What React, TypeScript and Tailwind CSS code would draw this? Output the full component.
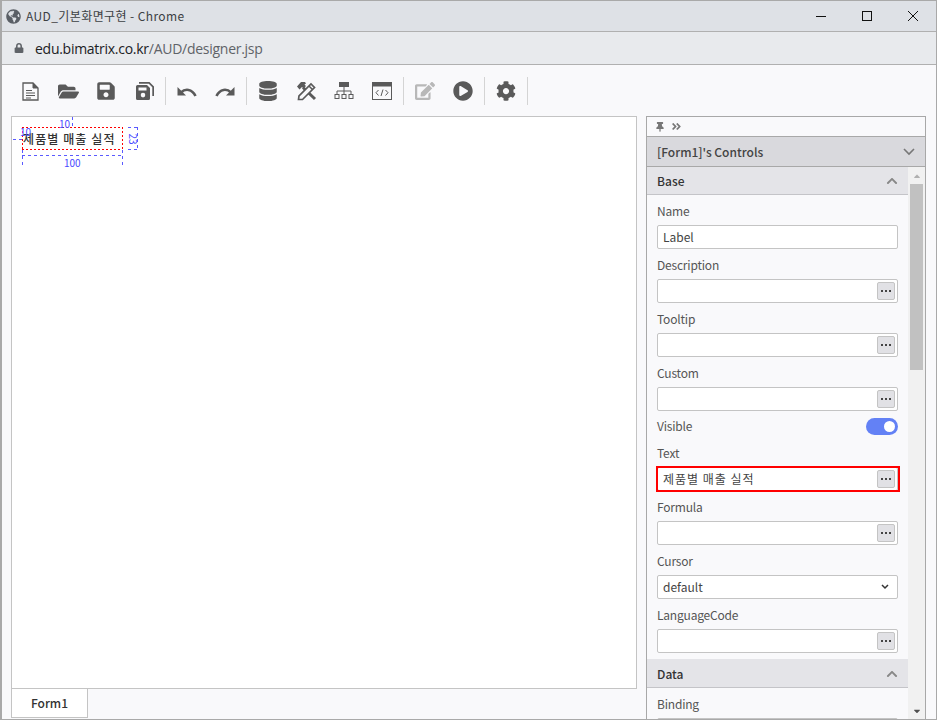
import React from "react";
import { FaFolderOpen, FaSave, FaDatabase, FaPlayCircle, FaEdit, FaCog, FaGlobeAmericas, FaLock, FaThumbtack, FaAngleDoubleRight, FaChevronUp, FaCaretUp, FaCaretDown } from "react-icons/fa";

const font = "font-['Noto_Sans_CJK_KR','Noto_Sans',sans-serif]";

const blueH = "bg-[repeating-linear-gradient(90deg,#5a5aff_0_3px,transparent_3px_6px)]";
const blueV = "bg-[repeating-linear-gradient(180deg,#5a5aff_0_3px,transparent_3px_6px)]";
const redH = "bg-[repeating-linear-gradient(90deg,#f00_0_2px,transparent_2px_4px)]";
const redV = "bg-[repeating-linear-gradient(180deg,#f00_0_2px,transparent_2px_4px)]";

function DocIcon() {
  return (
    <svg viewBox="0 0 17 19" width="17" height="19" fill="none" stroke="#5a5a5a">
      <path d="M1 1h10l5 5v12H1z" strokeWidth="1.300" />
      <path d="M11 1v5h5z" fill="#5a5a5a" strokeWidth="1" />
      <path d="M4 8.500h6M4 11h9M4 13.500h9M4 16h5" strokeWidth="1.200" />
    </svg>
  );
}

function SaveAll() {
  return (
    <svg viewBox="0 0 19 20" width="19" height="20" fill="#5a5a5a">
      <path d="M1 5.500A1.500 1.500 0 0 1 2.500 4H12l3 3v10.500A1.500 1.500 0 0 1 13.500 19h-11A1.500 1.500 0 0 1 1 17.500zM3.500 6.500v3h8v-3zM8 11.800a2.300 2.300 0 1 0 0 4.600A2.300 2.300 0 0 0 8 11.800z" />
      <path d="M4 1h10.500L19 5.500V15h-1.700V6.200L13.800 2.700H4z" />
    </svg>
  );
}

function ToolsIcon() {
  return (
    <svg viewBox="0 0 21 20" width="21" height="20" fill="none">
      <path d="M1 5.500 5 1h4l1 1.500-1.500 1L10 5l-2.500 2.500L6 6 3.500 8.500z" fill="#5a5a5a" />
      <path d="M7 6.500 19 18" stroke="#5a5a5a" strokeWidth="3" />
      <path d="M2.500 18.500 3 15 15 3l3.500 3.500-12 12z" fill="#f9f9fb" stroke="#5a5a5a" strokeWidth="1.700" />
      <path d="M13 5l3.500 3.500" stroke="#5a5a5a" strokeWidth="1.500" />
    </svg>
  );
}

function UndoIcon({ flip }: { flip?: boolean }) {
  return (
    <svg viewBox="0 0 20 11" width="20" height="11" fill="#5a5a5a" className={flip ? "-scale-x-100" : ""}>
      <path d="M0.500 1v8.500h8.500z" />
      <path d="M4 6.500C8 2.500 15 2.500 18.500 10" fill="none" stroke="#5a5a5a" strokeWidth="2.600" />
    </svg>
  );
}

function CodeWin() {
  return (
    <svg viewBox="0 0 20 20" width="20" height="20" fill="none" stroke="#5a5a5a">
      <rect x="0.500" y="1.500" width="19" height="17" strokeWidth="1" />
      <rect x="0.500" y="1.500" width="19" height="3.500" fill="#5a5a5a" />
      <path d="M6.500 9 4 11.700 6.500 14.500M13.500 9 16 11.700 13.500 14.500M11 8.500 9 15" strokeWidth="1" />
    </svg>
  );
}

function Sitemap() {
  return (
    <svg viewBox="0 0 20 20" width="20" height="20" fill="none" stroke="#5a5a5a">
      <rect x="5" y="1" width="10" height="5" fill="#5a5a5a" stroke="none" />
      <path d="M10 6v4M3 13v-3h14v3M10 10v3" />
      <rect x="1" y="13.500" width="4" height="4" />
      <rect x="8" y="13.500" width="4" height="4" />
      <rect x="15" y="13.500" width="4" height="4" />
    </svg>
  );
}

function Btn({ children }: { children: React.ReactNode }) {
  return <div className="w-[38px] h-[28px] flex items-center justify-center shrink-0">{children}</div>;
}

function Sep() {
  return <div className="w-px h-[28px] mx-[2px] bg-[#d4d4d4] shrink-0" />;
}

function Dots() {
  return (
    <div className="w-[18px] h-[18px] bg-[#e1e1e5] border border-[#c4c4c4] rounded-[2px] flex items-center justify-center gap-[2px] shrink-0">
      <span className="w-[2px] h-[2px] bg-[#444]" />
      <span className="w-[2px] h-[2px] bg-[#444]" />
      <span className="w-[2px] h-[2px] bg-[#444]" />
    </div>
  );
}

function Label({ text }: { text: string }) {
  return <div className="h-[30px] flex items-end pb-[5px] text-[12px] leading-[18px] text-[#555] tracking-[-0.2px]">{text}</div>;
}

function Field({ label, value, dots, wide }: { label: string; value?: string; dots?: boolean; wide?: boolean }) {
  return (
    <div>
      <Label text={label} />
      <div className="h-[24px] bg-white border border-[#c4c4c4] rounded-[2px] flex items-center justify-between pl-[5px] pr-[2px] text-[12px] text-[#444]">
        <span className={wide ? "tracking-[1px]" : ""}>{value}</span>
        {dots && <Dots />}
      </div>
    </div>
  );
}

function SectionHeader({ text, tall }: { text: string; tall?: boolean }) {
  return (
    <div className={`${tall ? "h-[29px] pt-[2px]" : "h-[28px]"} bg-[#e4e4e8] border-b border-[#c4c4c8] flex items-center justify-between pl-[10px] pr-[10px] text-[12px] font-medium text-[#333] shrink-0`}>
      <span>{text}</span>
      <FaChevronUp size={12} color="#888" />
    </div>
  );
}

export default function App() {
  return (
    <div className={`${font} w-[937px] h-[720px] flex flex-col overflow-hidden bg-[#f9f9fb] border-l-2 border-t border-r border-b border-[#a9a9a9] box-border`}>
      <div className="h-[30px] bg-[#dee1e6] border-b border-[#b0b0b0] flex items-center shrink-0 box-content">
        <div className="ml-[3px] w-[16px] flex justify-center">
          <FaGlobeAmericas size={15} color="#5a5f66" />
        </div>
        <span className="ml-[5px] text-[12px] text-[#3c4043] tracking-[0.4px]">AUD_기본화면구현 - Chrome</span>
        <div className="ml-auto flex items-center">
          <svg width="46" height="30" viewBox="0 0 46 30" fill="none" stroke="#111">
            <path d="M18 15.500h10" />
          </svg>
          <svg width="46" height="30" viewBox="0 0 46 30" fill="none" stroke="#111">
            <rect x="18.500" y="10.500" width="9" height="9" />
          </svg>
          <svg width="46" height="30" viewBox="0 0 46 30" fill="none" stroke="#111">
            <path d="M18 10l10 10M28 10l-10 10" />
          </svg>
        </div>
      </div>
      <div className="h-[32px] bg-[#e8eaed] border-b border-[#b0b0b0] flex items-center shrink-0 box-content">
        <div className="ml-[11px] w-[12px] flex justify-center">
          <FaLock size={10} color="#5f6368" />
        </div>
        <span className="ml-[10px] text-[14px] text-[#5f6368] font-['Open_Sans',sans-serif] tracking-[-0.27px]">
          <span className="text-[#202124]">edu.bimatrix.co.kr</span>/AUD/designer.jsp
        </span>
      </div>
      <div className="h-[51px] flex items-start pt-[12px] pl-[9px] shrink-0">
        <Btn><DocIcon /></Btn>
        <Btn><FaFolderOpen size={21} color="#5a5a5a" /></Btn>
        <Btn><FaSave size={20} color="#5a5a5a" /></Btn>
        <Btn><SaveAll /></Btn>
        <Sep />
        <Btn><UndoIcon /></Btn>
        <Btn><UndoIcon flip /></Btn>
        <Sep />
        <Btn><FaDatabase size={20} color="#5a5a5a" /></Btn>
        <Btn><ToolsIcon /></Btn>
        <Btn><Sitemap /></Btn>
        <Btn><CodeWin /></Btn>
        <Sep />
        <Btn><FaEdit size={20} color="#b8b8b8" /></Btn>
        <Btn><FaPlayCircle size={20} color="#5a5a5a" /></Btn>
        <Sep />
        <Btn><FaCog size={20} color="#5a5a5a" /></Btn>
        <Sep />
      </div>
      <div className="flex-1 min-h-0 flex pl-[9px]">
        <div className="w-[626px] flex flex-col shrink-0">
          <div className="flex-1 relative bg-white border border-[#c4c4c4] border-b-0">
            <div className="absolute left-[10px] top-[10px] w-[100px] h-[23px] flex items-center pl-px text-[12px] font-medium text-[#333] whitespace-nowrap tracking-[1.100px]">제품별 매출 실적</div>
            <div className={`absolute left-[10px] top-[10px] w-[100px] h-px ${redH}`} />
            <div className={`absolute left-[10px] top-[32px] w-[100px] h-px ${redH}`} />
            <div className={`absolute left-[10px] top-[10px] w-px h-[23px] ${redV}`} />
            <div className={`absolute left-[110px] top-[10px] w-px h-[23px] ${redV}`} />
            <div className="absolute left-[47px] top-[1px] text-[10px] leading-[12px] text-[#4a4aff]">10</div>
            <div className={`absolute left-[60px] top-0 w-px h-[10px] ${blueV}`} />
            <div className="absolute left-[8px] top-[9px] text-[10px] leading-[12px] text-[#4a4aff]">10</div>
            <div className={`absolute left-[1px] top-[22px] w-[9px] h-px ${blueH}`} />
            <div className={`absolute left-[116px] top-[10px] w-[10px] h-px ${blueH}`} />
            <div className={`absolute left-[116px] top-[32px] w-[10px] h-px ${blueH}`} />
            <div className={`absolute left-[125px] top-[10px] w-px h-[23px] ${blueV}`} />
            <div className="absolute left-[116px] top-[10px] w-[10px] h-[23px] flex items-center justify-center">
              <span className="text-[10px] leading-[10px] text-[#4a4aff] rotate-90">23</span>
            </div>
            <div className={`absolute left-[10px] top-[33px] w-px h-[16px] ${blueV}`} />
            <div className={`absolute left-[110px] top-[33px] w-px h-[16px] ${blueV}`} />
            <div className={`absolute left-[10px] top-[38px] w-[101px] h-px ${blueH}`} />
            <div className="absolute left-[52px] top-[40px] text-[10px] leading-[12px] text-[#4a4aff]">100</div>
          </div>
          <div className="h-[31px] flex shrink-0 border-t border-[#c4c4c4]">
            <div className="w-[77px] h-[29px] bg-white border border-t-0 border-[#c4c4c4] flex items-center justify-center text-[12px] font-medium text-[#333]">Form1</div>
          </div>
        </div>
        <div className="w-[280px] ml-[9px] shrink-0 flex flex-col border-x border-t border-[#a8a8a8] min-h-0">
          <div className="h-[19px] flex items-center pl-[8px] gap-[6px] border-b border-[#a8a8a8] box-content shrink-0">
            <FaThumbtack size={10} color="#777" />
            <FaAngleDoubleRight size={11} color="#777" />
          </div>
          <div className="h-[29px] bg-[#d9d9dd] border-b border-[#a8a8a8] flex items-center justify-between pl-[10px] pr-[10px] text-[12px] font-medium text-[#444] box-content shrink-0">
            <span>[Form1]'s Controls</span>
            <svg width="12" height="8" viewBox="0 0 12 8" fill="none" stroke="#777" strokeWidth="1.600"><path d="M1 1l5 5 5-5" /></svg>
          </div>
          <div className="flex-1 min-h-0 flex">
            <div className="flex-1 min-w-0 overflow-hidden flex flex-col">
              <SectionHeader text="Base" />
              <div className="pl-[10px] pr-[10px] shrink-0">
                <Field label="Name" value="Label" />
                <Field label="Description" dots />
                <Field label="Tooltip" dots />
                <Field label="Custom" dots />
                <div className="h-[26px] pt-[7px] flex justify-between items-start text-[12px] leading-[16px] text-[#555] tracking-[-0.2px]">
                  <span>Visible</span>
                  <div className="w-[32px] h-[17px] rounded-full bg-[#6381f5] flex items-center justify-end pr-[3px]">
                    <span className="w-[11px] h-[11px] rounded-full bg-white" />
                  </div>
                </div>
                <div className="relative">
                  <Field label="Text" value="제품별 매출 실적" dots wide />
                  <div className="absolute -left-[1px] -right-[2px] top-[29px] h-[26px] border-2 border-[#f00]" />
                </div>
                <Field label="Formula" dots />
                <div>
                  <Label text="Cursor" />
                  <div className="h-[24px] bg-white border border-[#c4c4c4] rounded-[2px] flex items-center justify-between pl-[5px] pr-[8px] text-[12px] text-[#444]">
                    <span>default</span>
                    <svg width="8" height="6" viewBox="0 0 8 6" fill="none" stroke="#333" strokeWidth="1.500"><path d="M1 1l3 3 3-3" /></svg>
                  </div>
                </div>
                <Field label="LanguageCode" dots />
              </div>
              <div className="mt-[6px] shrink-0"><SectionHeader text="Data" tall /></div>
              <div className="pl-[10px] pr-[10px] shrink-0">
                <Field label="Binding" />
              </div>
            </div>
            <div className="w-[17px] bg-[#f1f1f1] flex flex-col items-center shrink-0">
              <div className="h-[17px] flex items-center"><FaCaretUp size={10} color="#b0b0b0" /></div>
              <div className="w-[13px] h-[186px] bg-[#c1c1c1]" />
              <div className="flex-1" />
              <div className="h-[17px] flex items-center"><FaCaretDown size={10} color="#505050" /></div>
            </div>
          </div>
        </div>
      </div>
    </div>
  );
}
